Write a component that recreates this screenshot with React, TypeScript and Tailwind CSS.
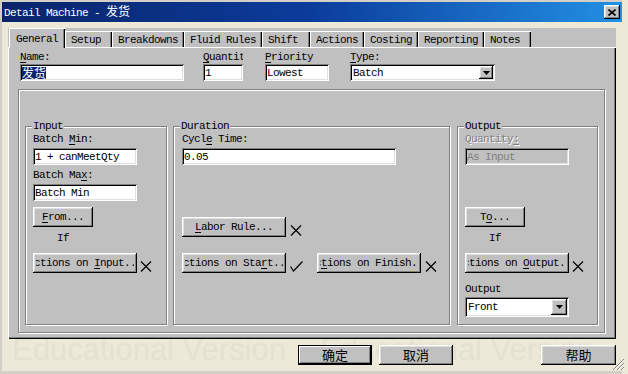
import type { ReactNode } from "react";

const raised =
  "bg-[#c0c0c0] shadow-[inset_-1px_-1px_#000,inset_1px_1px_#fff,inset_-2px_-2px_#808080,inset_2px_2px_#dfdfdf]";
const sunken =
  "shadow-[inset_1px_1px_#808080,inset_-1px_-1px_#fff,inset_2px_2px_#000,inset_-2px_-2px_#dfdfdf]";
const etched = "border border-[#808080] shadow-[inset_1px_1px_#fff,1px_1px_#fff]";
const cjk = "font-['Noto_Sans_CJK_SC',sans-serif] tracking-normal text-[12px]";
const tabEdge = "bg-[#c0c0c0] shadow-[inset_1px_1px_#fff,inset_-1px_0_#000,inset_-2px_0_#808080]";

function XMark() {
  return (
    <svg width="12" height="11" viewBox="0 0 12 11" className="shrink-0">
      <path d="M1 0.5 L11 10.5 M11 0.5 L1 10.5" stroke="#000" strokeWidth="1.2" fill="none" />
    </svg>
  );
}

function Check() {
  return (
    <svg width="13" height="11" viewBox="0 0 13 11" className="shrink-0">
      <path d="M0.5 5.5 L3.5 10 L12.5 0.5" stroke="#000" strokeWidth="1.2" fill="none" />
    </svg>
  );
}

function Button({ w, children }: { w: string; children: ReactNode }) {
  return (
    <div className={`${raised} ${w} flex h-[20px] shrink-0 items-center px-[3px]`}>
      <div className="flex w-full justify-center overflow-hidden whitespace-nowrap">
        <span className="shrink-0">{children}</span>
      </div>
    </div>
  );
}

function Field({ w, children, disabled }: { w: string; children: ReactNode; disabled?: boolean }) {
  return (
    <div
      className={`${sunken} ${w} flex h-[17px] shrink-0 items-center overflow-hidden whitespace-nowrap pl-[2px] ${
        disabled ? "bg-[#c0c0c0] text-[#808080]" : "bg-white"
      }`}
    >
      {children}
    </div>
  );
}

function Combo({ w, h, btn, value }: { w: string; h: string; btn: string; value: string }) {
  return (
    <div className={`${sunken} ${w} ${h} flex shrink-0 items-stretch bg-white p-[2px]`}>
      <div className="flex flex-1 items-center pl-[1px]">{value}</div>
      <div className={`${raised} ${btn} flex items-center justify-center`}>
        <svg width="7" height="4" viewBox="0 0 7 4">
          <path d="M0 0 H7 L3.5 4 Z" fill="#000" />
        </svg>
      </div>
    </div>
  );
}

function Group({ title, className, children }: { title: string; className: string; children: ReactNode }) {
  return (
    <div className={`${etched} relative flex h-[199px] shrink-0 flex-col pt-[6px] ${className}`}>
      <span className="absolute left-[6px] top-[-7px] bg-[#c0c0c0] px-[1px]">{title}</span>
      {children}
    </div>
  );
}

const tabs = [
  { label: "Setup", w: "w-[47px]" },
  { label: "Breakdowns", w: "w-[72px]" },
  { label: "Fluid Rules", w: "w-[78px]" },
  { label: "Shift", w: "w-[48px]" },
  { label: "Actions", w: "w-[54px]" },
  { label: "Costing", w: "w-[54px]" },
  { label: "Reporting", w: "w-[66px]" },
  { label: "Notes", w: "w-[47px]" },
];

export default function App() {
  return (
    <div className="relative h-[374px] w-[628px] overflow-hidden bg-[#ece9d8] font-['Liberation_Mono',monospace] text-[11px] leading-[12px] tracking-[-0.6px] text-black">
      <div className="absolute left-[12px] top-[334px] whitespace-nowrap font-['Liberation_Sans',Arial,sans-serif] text-[31px] leading-[31px] tracking-normal text-[#e4e1d1]">
        Educational Version
      </div>
      <div className="absolute left-[320px] top-[334px] whitespace-nowrap font-['Liberation_Sans',Arial,sans-serif] text-[31px] leading-[31px] tracking-normal text-[#e4e1d1]">
        Educational Version
      </div>

      <div className="relative flex h-[374px] w-[622px] flex-col border-b-[3px] border-l-2 border-t-2 border-[#d4d0c8]">
        {/* title bar */}
        <div className="flex h-[20px] shrink-0 items-center bg-[linear-gradient(to_right,#0a246a,#0b3c9c_50%,#2290e4)] pl-[2px] pr-[2px] text-white">
          <span className="whitespace-nowrap">
            Detail Machine - <span className={cjk}>发货</span>
          </span>
          <div className={`${raised} ml-auto flex h-[14px] w-[16px] items-center justify-center`}>
            <svg width="8" height="7" viewBox="0 0 8 7">
              <path d="M0.5 0.5 L7.5 6.5 M7.5 0.5 L0.5 6.5" stroke="#000" strokeWidth="1.6" />
            </svg>
          </div>
        </div>

        {/* tabs */}
        <div className="ml-[6px] mt-[6px] flex h-[19px] w-[608px] shrink-0 items-end bg-[#c0c0c0] pl-[1px]">
          <div className={`${tabEdge} relative z-10 -mb-px flex h-[20px] w-[56px] items-center pl-[7px] pt-[1px]`}>
            General
          </div>
          {tabs.map((t) => (
            <div
              key={t.label}
              className={`${tabEdge} ${t.w} flex h-[16px] items-center whitespace-nowrap pl-[6px] pt-[2px]`}
            >
              {t.label}
            </div>
          ))}
        </div>

        {/* tab page */}
        <div className="ml-[6px] flex h-[292px] w-[608px] shrink-0 flex-col bg-[#c0c0c0] pt-[4px] shadow-[inset_1px_1px_#fff,inset_-1px_-1px_#000,inset_-2px_-2px_#808080]">
          <div className="flex pl-[12px]">
            <div className="flex w-[164px] flex-col">
              <span className="h-[12px]">
                <u className="underline underline-offset-2">N</u>ame:
              </span>
              <div className="mt-px">
                <Field w="w-[164px]">
                  <span className={`${cjk} bg-[#0a246a] leading-[12px] text-white`}>发货</span>
                </Field>
              </div>
            </div>
            <div className="ml-[19px] flex w-[40px] flex-col">
              <span className="h-[12px] overflow-hidden whitespace-nowrap">
                <u className="underline underline-offset-2">Q</u>uantity
              </span>
              <div className="mt-px">
                <Field w="w-[40px]">1</Field>
              </div>
            </div>
            <div className="ml-[22px] flex w-[64px] flex-col">
              <span className="h-[12px]">
                <u className="underline underline-offset-2">P</u>riority
              </span>
              <div className="mt-px">
                <Field w="w-[64px]">Lowest</Field>
              </div>
            </div>
            <div className="ml-[21px] flex w-[145px] flex-col">
              <span className="h-[12px]">
                <u className="underline underline-offset-2">T</u>ype:
              </span>
              <div className="mt-px">
                <Combo w="w-[145px]" h="h-[17px]" btn="w-[14px]" value="Batch" />
              </div>
            </div>
          </div>

          <div className={`${etched} ml-[10px] mt-[8px] flex h-[244px] w-[587px] items-start pl-[6px] pt-[36px]`}>
            <Group title="Input" className="w-[142px] pl-[7px]">
              <span className="h-[12px]">
                Batch <u className="underline underline-offset-2">M</u>in:
              </span>
              <div className="mt-[3px]">
                <Field w="w-[104px]">1 + canMeetQty</Field>
              </div>
              <span className="mt-[4px] h-[12px]">
                Batch Ma<u className="underline underline-offset-2">x</u>:
              </span>
              <div className="mt-[3px]">
                <Field w="w-[104px]">Batch Min</Field>
              </div>
              <div className="mt-[6px]">
                <Button w="w-[60px]">
                  <u className="underline underline-offset-2">F</u>rom...
                </Button>
              </div>
              <span className="mt-[5px] h-[12px] w-[60px] text-center">If</span>
              <div className="mt-[9px] flex items-end">
                <Button w="w-[104px]">
                  Actions on <u className="underline underline-offset-2">I</u>nput...
                </Button>
                <div className="mb-px ml-[3px]">
                  <XMark />
                </div>
              </div>
            </Group>

            <Group title="Duration" className="ml-[6px] w-[277px] pl-[8px]">
              <span className="h-[12px]">
                Cycl<u className="underline underline-offset-2">e</u> Time:
              </span>
              <div className="mt-[3px]">
                <Field w="w-[214px]">0.05</Field>
              </div>
              <div className="mt-[52px] flex items-end">
                <Button w="w-[104px]">
                  <u className="underline underline-offset-2">L</u>abor Rule...
                </Button>
                <div className="mb-px ml-[4px]">
                  <XMark />
                </div>
              </div>
              <div className="mt-[16px] flex items-end">
                <Button w="w-[104px]">
                  Actions on Sta<u className="underline underline-offset-2">r</u>t...
                </Button>
                <div className="mb-px ml-[4px]">
                  <Check />
                </div>
                <div className="ml-[14px]">
                  <Button w="w-[104px]">
                    Ac<u className="underline underline-offset-2">t</u>ions on Finish...
                  </Button>
                </div>
                <div className="mb-px ml-[4px]">
                  <XMark />
                </div>
              </div>
            </Group>

            <Group title="Output" className="ml-[7px] w-[141px] pl-[7px]">
              <span className="h-[12px] text-[#808080] [text-shadow:1px_1px_0_#fff]">
                Quantity<u className="underline underline-offset-2">:</u>
              </span>
              <div className="mt-[3px]">
                <Field w="w-[104px]" disabled>
                  As Input
                </Field>
              </div>
              <div className="mt-[42px]">
                <Button w="w-[60px]">
                  T<u className="underline underline-offset-2">o</u>...
                </Button>
              </div>
              <span className="mt-[5px] h-[12px] w-[60px] text-center">If</span>
              <div className="mt-[9px] flex items-end">
                <Button w="w-[104px]">
                  Actions on <u className="underline underline-offset-2">O</u>utput...
                </Button>
                <div className="mb-px ml-[3px]">
                  <XMark />
                </div>
              </div>
              <span className="mt-[10px] h-[12px]">Output</span>
              <div className="mt-[2px]">
                <Combo w="w-[104px]" h="h-[20px]" btn="w-[16px]" value="Front" />
              </div>
            </Group>
          </div>
        </div>

        {/* dialog buttons */}
        <div className="mt-[6px] flex pl-[296px]">
          <div className="flex h-[20px] w-[74px] items-center justify-center border border-black bg-[#c0c0c0] shadow-[inset_-1px_-1px_#000,inset_1px_1px_#fff,inset_-2px_-2px_#808080]">
            <span className={`${cjk} text-[13px]`}>确定</span>
          </div>
          <div className={`${raised} ml-[7px] flex h-[20px] w-[74px] items-center justify-center`}>
            <span className={`${cjk} text-[13px]`}>取消</span>
          </div>
          <div className={`${raised} ml-[88px] flex h-[20px] w-[75px] items-center justify-center`}>
            <span className={`${cjk} text-[13px]`}>帮助</span>
          </div>
        </div>
      </div>

      {/* size grip */}
      <svg width="13" height="13" viewBox="0 0 13 13" className="absolute bottom-[3px] right-[3px]">
        <path d="M12 1 L1 12 M12 5 L5 12 M12 9 L9 12" stroke="#808080" strokeWidth="1" />
        <path d="M12 2 L2 12 M12 6 L6 12 M12 10 L10 12" stroke="#fff" strokeWidth="1" />
      </svg>
    </div>
  );
}
